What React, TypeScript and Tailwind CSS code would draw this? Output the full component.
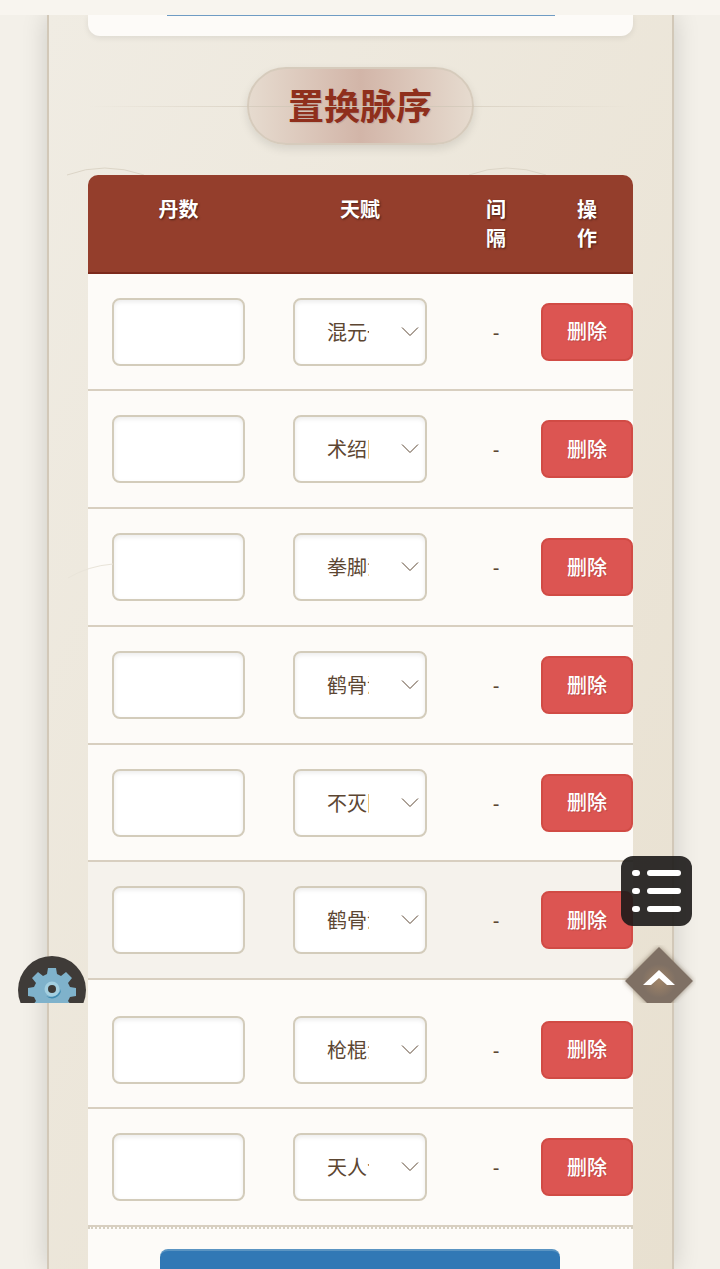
const ROWS = [
  { talent: '混元一气', h: 'h-[117px]', alt: false, tall: false },
  { talent: '术绍阳明', h: 'h-[118px]', alt: false, tall: false },
  { talent: '拳脚法门', h: 'h-[118px]', alt: false, tall: false },
  { talent: '鹤骨清风', h: 'h-[118px]', alt: false, tall: false },
  { talent: '不灭阳明', h: 'h-[117px]', alt: false, tall: false },
  { talent: '鹤骨清风', h: 'h-[118px]', alt: true, tall: false },
  { talent: '枪棍法门', h: 'h-[129px]', alt: false, tall: true },
  { talent: '天人合一', h: 'h-[118px]', alt: false, tall: false },
];

const CJK = "font-['Liberation_Sans','Noto_Sans_CJK_SC',sans-serif]";

function Row({ talent, h, alt, tall }: { talent: string; h: string; alt: boolean; tall: boolean }) {
  return (
    <div
      className={`grid grid-cols-[181px_182px_90px_92px] items-center border-b-2 border-[#d8cfc0] ${h} ${
        alt ? 'bg-[#f5f2ec]' : 'bg-[#fdfbf8]'
      } ${tall ? 'pt-[12px]' : ''}`}
    >
      <div className="flex justify-center pr-[1px]">
        <input
          type="text"
          className="h-[68px] w-[133px] rounded-lg border-2 border-[#d3ccbb] bg-white shadow-[inset_0_2px_4px_rgba(0,0,0,0.08)]"
        />
      </div>
      <div className="flex justify-center">
        <div className="relative h-[68px] w-[134px]">
          <select
            defaultValue={talent}
            className="h-full w-full appearance-none rounded-lg border-2 border-[#d3ccbb] bg-white pl-[32px] pr-[56px] pt-[2px] text-[20px] text-[#5c4632] shadow-[inset_0_2px_4px_rgba(0,0,0,0.08)]"
          >
            <option>{talent}</option>
          </select>
          <svg
            className="pointer-events-none absolute right-[8px] top-[28px] h-[12px] w-[18px]"
            viewBox="0 0 18 12"
            fill="none"
            stroke="#5c4632"
            strokeWidth="1"
          >
            <path d="M1 1.5l8 8 8-8" />
          </svg>
        </div>
      </div>
      <div className="pt-[2px] text-center text-[20px] text-[#5c4632]">-</div>
      <button className="h-[58px] w-[92px] rounded-lg border-2 border-[#d14b45] bg-[#dc5552] pt-[1px] text-[20px] font-medium text-white [text-shadow:1px_1px_1px_rgba(0,0,0,0.15)]">
        删除
      </button>
    </div>
  );
}

function Gear() {
  return (
    <svg viewBox="0 0 48 48" className="-mt-[2px] h-[48px] w-[48px]">
      <path
        fill="#7fb2cb"
        d="M20 3h8l1 6 4 2 5-4 6 6-4 5 2 4 6 1v8l-6 1-2 4 4 5-6 6-5-4-4 2-1 6h-8l-1-6-4-2-5 4-6-6 4-5-2-4-6-1v-8l6-1 2-4-4-5 6-6 5 4 4-2z"
      />
      <path d="M33 24a9 9 0 0 1-15 7 11 11 0 0 0 15-7z" fill="#3f8bb0" />
      <circle cx="24" cy="24" r="7.5" fill="#a3cfe0" />
      <circle cx="24" cy="24" r="4" fill="#3d3a36" />
    </svg>
  );
}

export default function App() {
  return (
    <div className={`relative h-[1269px] w-[720px] overflow-hidden bg-[#f3f0e9] ${CJK}`}>
      <div className="relative z-10 h-[15px] bg-[#f8f5ef]" />

      <div className="ml-[47px] h-[1254px] w-[627px] border-x-2 border-[#d2c8b8] bg-gradient-to-br from-[#f0ece3] to-[#e8e0d0] px-[39px] shadow-[0_0_24px_rgba(0,0,0,0.16)]">
        <div className="relative h-[21px] rounded-b-xl bg-[#fdfbf8] shadow-[0_2px_6px_rgba(0,0,0,0.08)]">
          <div className="mx-auto h-[1px] w-[388px] bg-[#6f9cc4]" />
        </div>

        <div className="relative mt-[31px] flex h-[78px] items-center justify-center">
          <div className="mr-[1px] flex h-[78px] w-[227px] items-center justify-center rounded-[39px] border-2 border-[#d6cbbc] bg-gradient-to-r from-[#e6dbcf] via-[#d2b5a8] to-[#e6dbcf] pt-[4px] shadow-[0_4px_10px_rgba(0,0,0,0.1)]">
            <h2 className="text-[36px] font-bold leading-none text-[#8f2f1c] [text-shadow:1px_1px_1px_rgba(0,0,0,0.1)]">
              置换脉序
            </h2>
          </div>
          <div className="absolute left-0 right-0 top-[39px] h-[1px] bg-gradient-to-r from-transparent via-[#cfc6b6] to-transparent" />
        </div>

        <div className="relative mt-[30px]">
          <svg
            className="absolute left-[-22px] top-[-10px] h-[12px] w-[84px]"
            viewBox="0 0 84 12"
            fill="none"
            stroke="#dcd5c7"
          >
            <path d="M1 10Q38-4 78 10" />
          </svg>
          <svg
            className="absolute left-[380px] top-[-10px] h-[12px] w-[84px]"
            viewBox="0 0 84 12"
            fill="none"
            stroke="#dcd5c7"
          >
            <path d="M1 10Q38-4 78 10" />
          </svg>

          <div className="relative grid h-[99px] grid-cols-[181px_182px_90px_92px] rounded-t-[10px] border-b-2 border-[#7c2a1c] bg-[#943e2c] pt-[21px] text-center text-[20px] font-bold leading-[29px] text-white [text-shadow:1px_1px_2px_rgba(0,0,0,0.5)]">
            <div>丹数</div>
            <div>天赋</div>
            <div>
              间<br />隔
            </div>
            <div>
              操<br />作
            </div>
          </div>

          {ROWS.map((r, i) => (
            <Row key={i} {...r} />
          ))}

          <div className="border-t-2 border-dotted border-[#d5cfc1] bg-[#fdfbf8] pt-[20px]">
            <div className="ml-[72px] h-[60px] w-[400px] rounded-lg border-t-2 border-[#5a94c2] bg-[#3178b5]" />
          </div>

          <svg
            className="pointer-events-none absolute left-[-20px] top-[388px] h-[16px] w-[50px]"
            viewBox="0 0 50 16"
            fill="none"
            stroke="#e9e4d9"
          >
            <path d="M0 15Q20 3 45 1" />
          </svg>
        </div>
      </div>

      <div className="absolute left-[18px] top-[956px] h-[47px] w-[68px] overflow-hidden">
        <div className="flex h-[68px] w-[68px] items-center justify-center rounded-full bg-[#3f3b38]">
          <Gear />
        </div>
      </div>

      <div className="absolute left-[621px] top-[856px] flex h-[70px] w-[71px] flex-col justify-center gap-[12px] rounded-[12px] bg-[#1c1a18]/90 px-[11px]">
        {[0, 1, 2].map((i) => (
          <div key={i} className="flex items-center gap-[7px]">
            <span className="h-[6px] w-[8px] rounded-full bg-white" />
            <span className="h-[6px] w-[35px] rounded-full bg-white" />
          </div>
        ))}
      </div>

      <div className="absolute left-[622px] top-[945px] h-[58px] w-[74px] overflow-hidden">
        <div className="ml-[13px] mt-[12px] flex h-[48px] w-[48px] rotate-45 items-center justify-center bg-[radial-gradient(circle,#a08468_0%,#7f7064_50%)] shadow-[0_0_5px_rgba(90,70,50,0.6)]">
          <svg viewBox="0 0 36 36" className="h-[36px] w-[36px] shrink-0 -rotate-45">
            <path d="M2 22L18 7l16 15h-8l-8-7-8 7z" fill="#fff" />
          </svg>
        </div>
      </div>
    </div>
  );
}
